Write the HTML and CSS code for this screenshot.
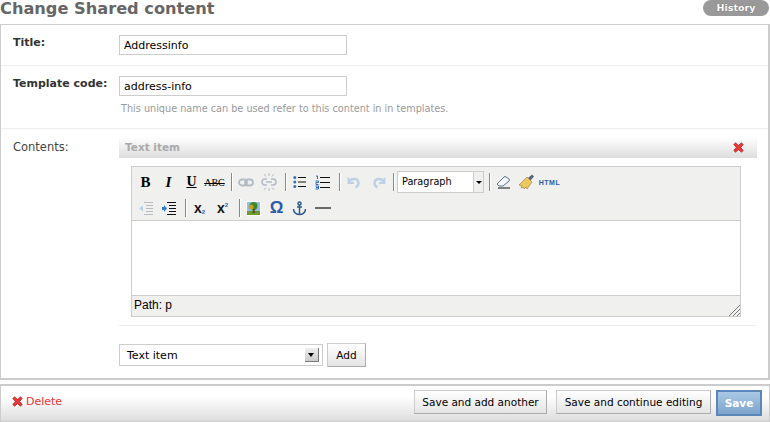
FILE: index.html
```html
<!DOCTYPE html>
<html lang="en">
<head>
    <meta charset="UTF-8">
    <title>Change Shared content</title>
    <link rel="stylesheet" href="styles.css">
</head>
<body>
<div class="page-head">
    <h1>Change Shared content</h1>
    <a class="history" href="#">History</a>
</div>

<div class="main-box">
    <div class="form-row first">
        <label class="field-label">Title:</label>
        <input class="text-input" type="text" value="Addressinfo">
    </div>
    <div class="form-row second">
        <label class="field-label">Template code:</label>
        <div>
            <input class="text-input" type="text" value="address-info">
            <p class="help">This unique name can be used refer to this content in in templates.</p>
        </div>
    </div>
    <div class="contents-row">
        <div class="contents-label">Contents:</div>
        <div class="contents-body">
            <div class="item-head">
                <span>Text item</span>
                <svg class="x-icon" width="11" height="11" viewBox="0 0 11 11"><path d="M2.500.8 5.500 3.300 8.500.8 10.200 2.500 7.700 5.500 10.200 8.500 8.500 10.200 5.500 7.700 2.500 10.200.8 8.500 3.300 5.500.8 2.500Z" fill="#e8383a" stroke="#a82020" stroke-width=".7"/></svg>
            </div>
            <div class="editor">
                <div class="toolbar">
                    <div class="tool-row">
                        <span class="tool t-b">B</span>
                        <span class="tool t-i">I</span>
                        <span class="tool t-u">U</span>
                        <span class="tool t-s">ABC</span>
                        <span class="sep"></span>
                        <span class="tool"><svg width="16" height="9" viewBox="0 0 16 9" fill="none" stroke="#b4bcc6" stroke-width="1.800"><rect x="1" y="1.500" width="8" height="6" rx="3"/><rect x="7" y="1.500" width="8" height="6" rx="3"/></svg></span>
                        <span class="tool"><svg width="16" height="18" viewBox="0 0 16 18" fill="none" stroke="#b4bcc6" stroke-width="1.600"><path d="M6 6H4a3 3 0 0 0 0 6h2M10 6h2a3 3 0 0 1 0 6h-2M5 9h6"/><path d="M8 0v3M8 15v3M3 1l2 2.500M13 1l-2 2.500M3 17l2-2.500M13 17l-2-2.500" stroke-width="1"/></svg></span>
                        <span class="sep"></span>
                        <span class="tool"><svg width="14" height="14" viewBox="0 0 14 14"><path d="M5 2.500h8M5 7h8M5 11.500h8" stroke="#111" stroke-width="1.100"/><circle cx="1.800" cy="2.500" r="1.500" fill="#3a6fb0"/><circle cx="1.800" cy="7" r="1.500" fill="#3a6fb0"/><circle cx="1.800" cy="11.500" r="1.500" fill="#3a6fb0"/></svg></span>
                        <span class="tool"><svg width="15" height="15" viewBox="0 0 15 15"><path d="M5 2.500h10M5 7.500h10M5 12.500h10" stroke="#111" stroke-width="1.100"/><path d="M1 1h1.500v3M.5 6h3v1.500H1v2h2.500M.5 11h3v3h-3M1 12.500h2.500" fill="none" stroke="#2f6cc0" stroke-width="1"/></svg></span>
                        <span class="sep"></span>
                        <span class="tool"><svg width="13" height="13" viewBox="0 0 13 13" fill="none" stroke="#bcd0e6" stroke-width="2.400"><path d="M2 6c1.500-3.500 9-5 9.500 1 0 2-1 3.500-3 4.500"/><path d="M1.500 1.500v5.500h5.500" stroke-width="1.800"/></svg></span>
                        <span class="tool redo"><svg width="13" height="13" viewBox="0 0 13 13" fill="none" stroke="#bcd0e6" stroke-width="2.400"><path d="M11 6C9.500 2.500 2 1 1.500 7c0 2 1 3.500 3 4.500"/><path d="M11.500 1.500v5.500H6" stroke-width="1.800"/></svg></span>
                        <span class="sep tight"></span>
                        <div class="fmt-select"><span class="fmt-text">Paragraph</span><span class="fmt-arrow"></span></div>
                        <span class="sep"></span>
                        <span class="tool"><svg width="15" height="14" viewBox="0 0 15 14"><path d="M1 9 8 2q1-1 2 0l3 2q1 1 0 2L7 11H3Z" fill="#f4f6fa" stroke="#56708c"/><path d="M2 13h12" stroke="#111"/></svg></span>
                        <span class="tool"><svg width="17" height="17" viewBox="0 0 17 17"><path d="M10 4 14 .5l2 2-3.500 4Z" fill="#55667e"/><path d="M9 3l5 5-5 7-1-2-2 2-1-2-2 1 1-2-3-1Z" fill="#ecc85e" stroke="#96793a" stroke-width=".6"/></svg></span>
                        <span class="tool t-html">HTML</span>
                    </div>
                    <div class="tool-row">
                        <span class="tool"><svg width="14" height="13" viewBox="0 0 14 13"><path d="M5 .5h9M7 3.500h7M7 6.500h7M7 9.500h7M5 12.500h9" stroke="#b8bcc2"/><path d="M0 6.500 4 3.500v6Z" fill="#bcd0e6"/></svg></span>
                        <span class="tool"><svg width="14" height="13" viewBox="0 0 14 13"><path d="M5 .5h9M7 3.500h7M7 6.500h7M7 9.500h7M5 12.500h9" stroke="#111"/><path d="M0 5h2V3l3 3.500-3 3.500V8H0Z" fill="#3b7ad0"/></svg></span>
                        <span class="sep"></span>
                        <span class="tool t-sub">x<small>2</small></span>
                        <span class="tool t-sup">x<small>2</small></span>
                        <span class="sep"></span>
                        <span class="tool"><svg width="15" height="15" viewBox="0 0 15 15"><rect width="15" height="15" fill="#fff"/><rect x="1" y="1" width="13" height="13" fill="#8fc0e8"/><rect x="1" y="10" width="13" height="4" fill="#6a9a30"/><circle cx="7.500" cy="5" r="4" fill="#3e8a28"/><circle cx="5" cy="6" r="2.500" fill="#c8a030"/><path d="M7 8h1.500l.5 4H6.500Z" fill="#6a4420"/></svg></span>
                        <span class="tool t-omega">Ω</span>
                        <span class="tool"><svg width="15" height="15" viewBox="0 0 15 15" fill="none" stroke="#2f5c8c" stroke-width="1.500"><circle cx="7.500" cy="2.500" r="1.500"/><path d="M7.500 4v10M5 6h5M1.500 8c0 3.500 3 5.500 6 5.500s6-2 6-5.500"/></svg></span>
                        <span class="tool"><svg width="16" height="2" viewBox="0 0 16 2"><path d="M0 1h16" stroke="#111" stroke-width="1.200"/></svg></span>
                    </div>
                </div>
                <div class="edit-area"></div>
                <div class="status-bar">
                    <span>Path: p</span>
                    <svg class="grip" width="11" height="11" viewBox="0 0 11 11" stroke="#777" fill="none"><path d="M0 11 11 0M4 11l7-7M8 11l3-3"/></svg>
                </div>
            </div>
            <div class="add-row">
                <div class="type-select"><span>Text item</span><span class="type-arrow"></span></div>
                <button class="btn add-btn" type="button">Add</button>
            </div>
        </div>
    </div>
</div>

<div class="submit-row">
    <a class="delete" href="#">
        <svg width="11" height="11" viewBox="0 0 11 11"><path d="M2.500.8 5.500 3.300 8.500.8 10.200 2.500 7.700 5.500 10.200 8.500 8.500 10.200 5.500 7.700 2.500 10.200.8 8.500 3.300 5.500.8 2.500Z" fill="#e8383a" stroke="#a82020" stroke-width=".7"/></svg>
        Delete
    </a>
    <button class="btn" type="button">Save and add another</button>
    <button class="btn continue" type="button">Save and continue editing</button>
    <button class="btn save" type="button">Save</button>
</div>
</body>
</html>
```

FILE: styles.css
```css
html, body { margin: 0; padding: 0; height: 422px; overflow: hidden; }
body { background: #fff; color: #333; font-family: "DejaVu Sans", sans-serif; font-size: 11px; }
* { box-sizing: border-box; }

.page-head { display: flex; justify-content: space-between; height: 24px; }
h1 { margin: -2px 0 0 0; font-size: 16.200px; line-height: 22px; font-weight: bold; color: #666; }
.history { width: 66px; height: 16px; margin-right: 1px; border-radius: 8px; background: #999; color: #fff; font-size: 9.500px; font-weight: bold; line-height: 15px; text-align: center; text-decoration: none; text-shadow: 0 0 1px #555; }

.main-box { height: 356px; border: 1px solid #ccc; border-bottom-width: 2px; border-right-width: 2px; }
.form-row { display: flex; padding: 10px 12px 0; border-bottom: 1px solid #eee; }
.form-row.first { height: 41px; }
.form-row.second { height: 63px; }
.field-label { width: 106px; font-weight: bold; font-size: 11px; line-height: 16px; color: #333; white-space: nowrap; }
.text-input { display: block; width: 228px; height: 20px; padding: 0 4px; border: 1px solid #ccc; background: #fff; color: #000; font: 11px "DejaVu Sans", sans-serif; }
.help { margin: 6px 0 0 2px; color: #999; font-size: 9.700px; line-height: 13px; white-space: nowrap; }

.contents-row { display: flex; padding: 8px 0 0 12px; }
.contents-label { width: 106px; padding-top: 3px; font-size: 11.500px; color: #444; }
.contents-body { width: 638px; }
.item-head { display: flex; justify-content: space-between; align-items: center; height: 21px; padding: 0 13px 0 6px; background: linear-gradient(#fff, #ddd); color: #aaa; font-size: 10.500px; font-weight: bold; }
.item-head span { margin-top: -2px; }

.editor { width: 610px; margin: 8px 0 0 12px; border: 1px solid #ccc; }
.toolbar { height: 54px; padding: 2px 0 0 2px; background: #f0f0ee; border-bottom: 1px solid #ccc; }
.tool-row { display: flex; align-items: center; height: 26px; }
.tool { display: flex; justify-content: center; align-items: center; flex: none; width: 23px; height: 20px; color: #000; }
.tool.redo { margin-left: 3px; }
.sep { flex: none; width: 1px; height: 18px; margin: 0 2px 0 5px; background: #888; box-shadow: 1px 0 0 #fff; }
.sep.tight { margin: 0 3px 0 2px; }
.t-b { font: bold 15px "Liberation Serif", serif; }
.t-i { font: italic bold 15px "Liberation Serif", serif; }
.t-u { font: bold 14px "Liberation Serif", serif; text-decoration: underline; }
.t-s { font: 10px "Liberation Serif", serif; text-decoration: line-through; }
.t-html { color: #2a5ca8; font: bold 7px "Liberation Sans", sans-serif; letter-spacing: .5px; }
.t-sub, .t-sup { font: bold 14px "Liberation Sans", sans-serif; color: #111; }
.t-sub small, .t-sup small { font-size: 6px; color: #2a5ca8; }
.t-sub small { margin-top: 7px; }
.t-sup small { margin-top: -7px; }
.t-omega { color: #2a5ca8; font: bold 17px "Liberation Sans", sans-serif; }

.fmt-select { display: flex; flex: none; width: 87px; height: 22px; border: 1px solid #ccc; background: #fff; }
.fmt-text { flex: 1; padding-left: 4px; color: #000; font: 9.700px/20px "DejaVu Sans", sans-serif; }
.fmt-arrow { position: relative; width: 10px; border-left: 1px solid #ccc; background: #f0f0ee; }
.fmt-arrow::after { content: ""; position: absolute; left: 2px; top: 9px; border: 3px solid transparent; border-top: 3px solid #000; }

.edit-area { height: 74px; background: #fff; }
.status-bar { display: flex; justify-content: space-between; align-items: flex-end; height: 21px; padding-left: 2px; background: #f0f0ee; border-top: 1px solid #ccc; color: #000; font: 12px/18px "Liberation Sans", sans-serif; }
.status-bar span { align-self: flex-start; }

.add-row { display: flex; align-items: center; gap: 4px; height: 58px; margin-top: 8px; border-top: 1px solid #eee; }
.type-select { position: relative; width: 204px; height: 22px; padding-left: 7px; border: 1px solid #ccc; background: #fff; color: #000; font-size: 11px; line-height: 21px; }
.type-arrow { position: absolute; right: 3px; top: 3px; width: 14px; height: 14px; background: linear-gradient(#eee, #ccc); border-right: 1px solid #777; border-bottom: 1px solid #777; }
.type-arrow::after { content: ""; position: absolute; left: 3px; top: 5px; border: 3px solid transparent; border-top: 4px solid #000; }

.btn { height: 24px; padding: 0; border: 1px solid #ccc; border-right-color: #aaa; border-bottom-color: #aaa; background: linear-gradient(#fff, #e4e4e4); color: #000; font: 10.500px "DejaVu Sans", sans-serif; white-space: nowrap; }

.submit-row { display: flex; align-items: flex-start; height: 38px; margin-top: 4px; padding: 4px 7px 0 11px; border: 2px solid #ccc; border-width: 2px 1px 1px; background: linear-gradient(#fff 30%, #ddd); }
.delete { display: flex; align-items: center; gap: 3px; margin: 5px auto 0 0; color: #e33; font-size: 11px; text-decoration: none; }
.submit-row .btn { width: 133px; }
.submit-row .continue { width: 155px; margin-left: 9px; }
.submit-row .save { width: 46px; height: 26px; margin-left: 5px; border: 2px solid #5b86b8; background: linear-gradient(#a9c8e6, #7ea4cc); color: #fff; font-weight: bold; }
.add-btn { width: 39px; }
```
